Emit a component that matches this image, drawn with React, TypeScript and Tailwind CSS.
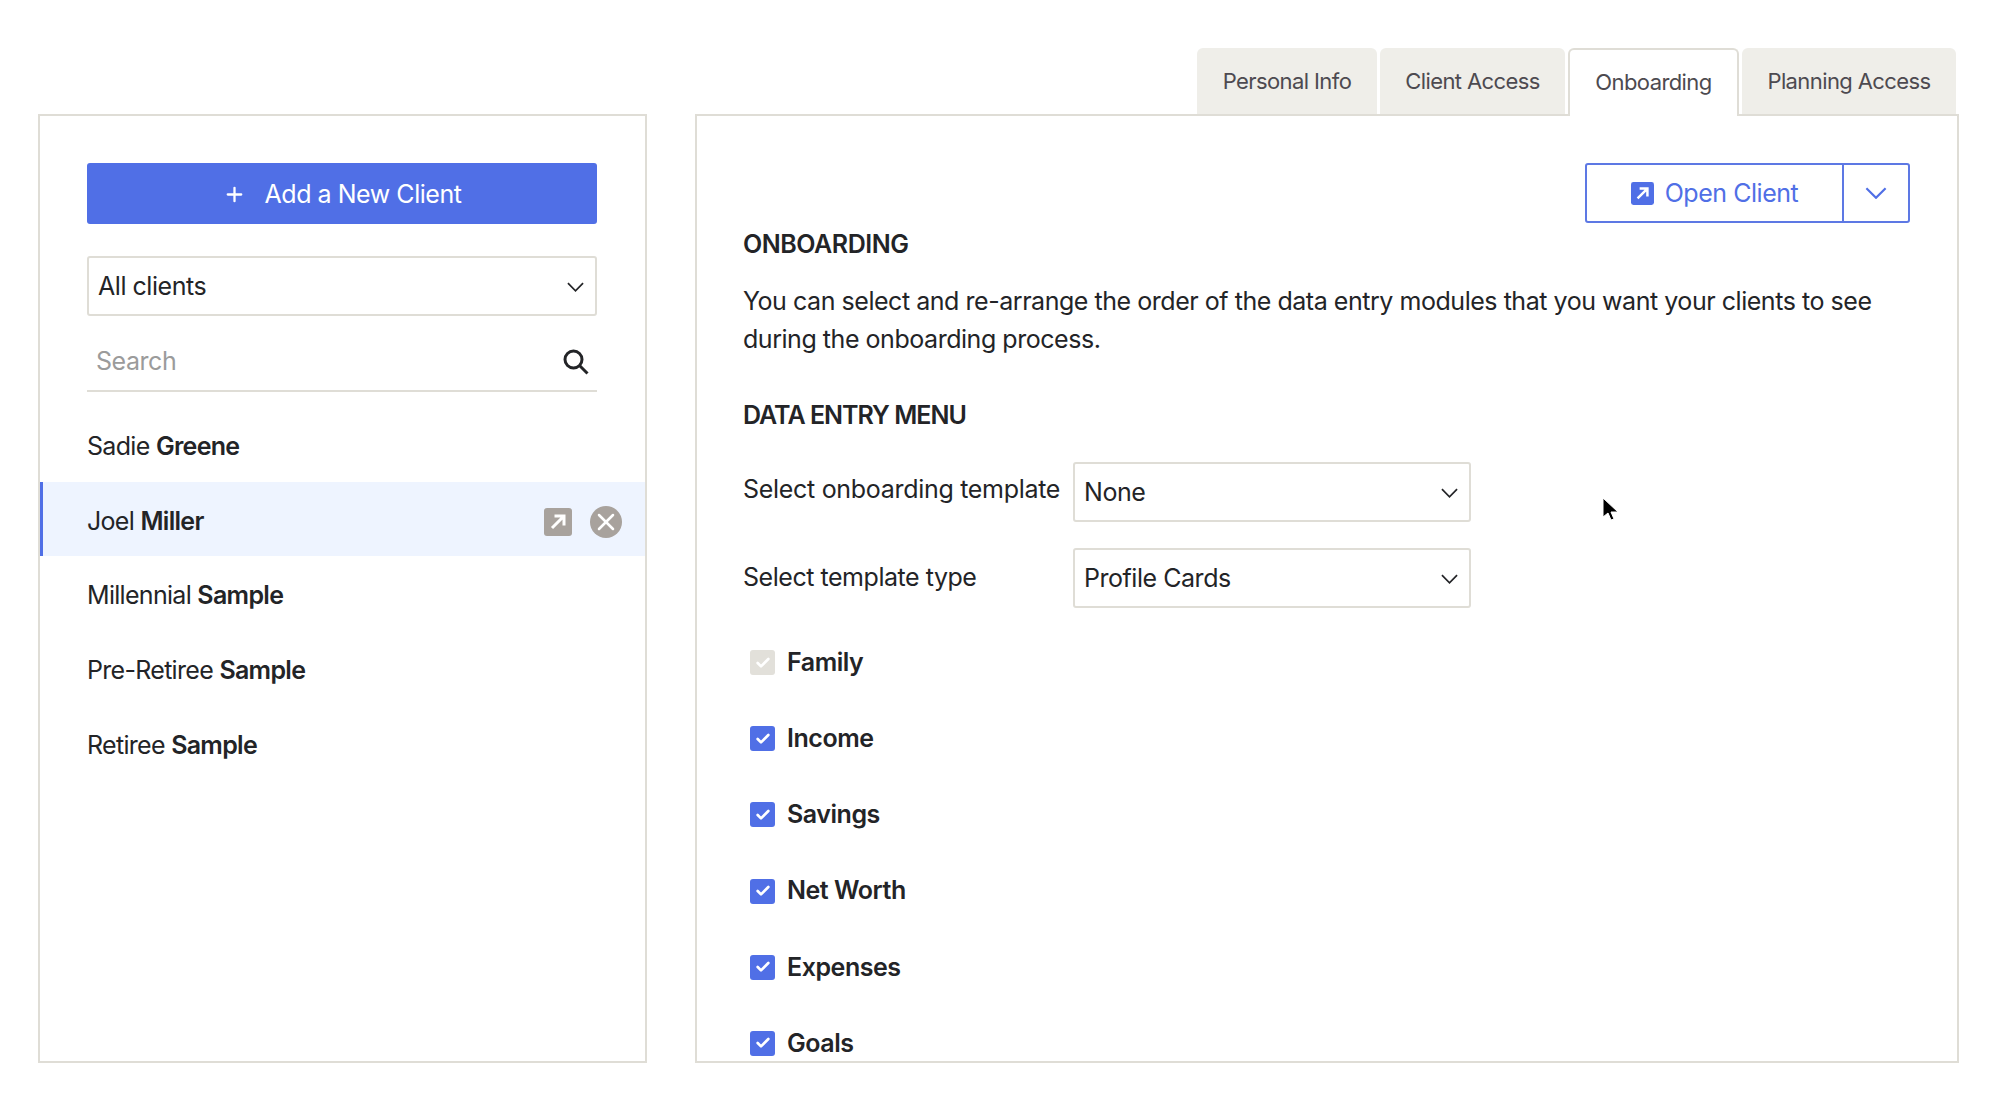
import { Check, Plus, X } from "lucide-react";

const tabs = [
  { label: "Personal Info", width: "w-[180px]" },
  { label: "Client Access", width: "w-[185px]" },
  { label: "Onboarding", width: "w-[171px]", active: true },
  { label: "Planning Access", width: "w-[214px]" },
];

const clients = [
  { first: "Sadie", last: "Greene" },
  { first: "Joel", last: "Miller", active: true },
  { first: "Millennial", last: "Sample" },
  { first: "Pre-Retiree", last: "Sample" },
  { first: "Retiree", last: "Sample" },
];

const modules = ["Family", "Income", "Savings", "Net Worth", "Expenses", "Goals"];

function Chevron({ className }: { className?: string }) {
  return (
    <svg viewBox="0 0 18 10" fill="none" stroke="currentColor" strokeWidth="1.8" className={className}>
      <path d="M1 1l8 8 8-8" />
    </svg>
  );
}

function ArrowBox({ className }: { className?: string }) {
  return (
    <svg viewBox="0 0 28 28" className={className}>
      <rect width="28" height="28" rx="3" fill="currentColor" />
      <path d="M8 20L20 8M10.5 8H20v9.5" fill="none" stroke="#fff" strokeWidth="3" />
    </svg>
  );
}

function SelectBox({ value, className }: { value: string; className: string }) {
  return (
    <div className={`flex items-center justify-between rounded-[3px] border-2 border-[#dfddd6] pl-[9px] pr-[11px] pt-[1px] text-[#232427] ${className}`}>
      <span>{value}</span>
      <Chevron className="h-[10px] w-[17px]" />
    </div>
  );
}

export default function App() {
  return (
    <div className="relative flex h-[1114px] w-[2000px] gap-[48px] overflow-hidden bg-white pl-[38px] pt-[48px] font-['Inter',sans-serif] text-[25px] tracking-[-0.46px] text-[#232427]">
      {/* client list */}
      <div className="mt-[66px] h-[949px] w-[609px] border-2 border-[#dfddd6]">
        <div className="pl-[47px] pr-[48px] pt-[47px]">
          <button className="flex h-[61px] w-full items-center justify-center gap-[19px] rounded-[3px] bg-[#506fe6] pt-[2px] text-white">
            <Plus size={23} strokeWidth={2.4} />
            Add a New Client
          </button>
          <SelectBox value="All clients" className="mt-[32px] h-[60px]" />
          <div className="mt-[16px] flex h-[60px] items-center justify-between border-b-2 border-[#dfddd6] pl-[9px] pr-[8px] pt-[1px] text-[#9b9b9b]">
            <span>Search</span>
            <svg viewBox="0 0 26 26" fill="none" stroke="#232427" strokeWidth="3" className="h-[26px] w-[26px]">
              <circle cx="10.5" cy="10.5" r="8.5" />
              <path d="M16.5 16.5L24.5 24.5" />
            </svg>
          </div>
        </div>
        <div className="mt-[15px]">
          {clients.map((c) => (
            <div
              key={c.first}
              className={`flex h-[74.7px] items-center justify-between pr-[23px] pt-[5px] tracking-[-0.7px] ${
                c.active ? "border-l-[3px] border-[#506fe6] bg-[#eef4ff] pl-[44px]" : "pl-[47px]"
              }`}
            >
              <span>
                {c.first} <b className="font-semibold">{c.last}</b>
              </span>
              {c.active && (
                <div className="flex items-center gap-[18px]">
                  <ArrowBox className="h-[28px] w-[28px] text-[#a8a29d]" />
                  <span className="flex h-[32px] w-[32px] items-center justify-center rounded-full bg-[#a8a29d] text-white">
                    <X size={28} strokeWidth={2.2} />
                  </span>
                </div>
              )}
            </div>
          ))}
        </div>
      </div>

      {/* details */}
      <div className="w-[1264px]">
        <div className="flex h-[66px] justify-end gap-[3px] pr-[3px]">
          {tabs.map((t) => (
            <div
              key={t.label}
              className={`relative z-10 flex items-center justify-center rounded-t-[6px] text-[22px] tracking-[-0.6px] text-[#4d4a50] ${t.width} ${
                t.active ? "h-[68px] border-2 border-b-0 border-[#dfddd6] bg-white pb-[1px]" : "h-[66px] bg-[#efeee9] pt-[1px]"
              }`}
            >
              {t.label}
            </div>
          ))}
        </div>
        <div className="h-[949px] overflow-hidden border-2 border-[#dfddd6] pl-[46px] pr-[47px] pt-[47px]">
          <div className="flex justify-end">
            <div className="flex h-[60px] w-[325px] rounded-[3px] border-2 border-[#5d78e4] text-[#506fe6]">
              <button className="flex flex-1 items-center justify-center gap-[11px] pt-[1px]">
                <ArrowBox className="h-[23px] w-[23px]" />
                Open Client
              </button>
              <button className="flex w-[66px] items-center justify-center border-l-2 border-[#5d78e4]">
                <Chevron className="h-[12px] w-[22px]" />
              </button>
            </div>
          </div>
          <h2 className="mt-[4px] font-semibold leading-[34px]">ONBOARDING</h2>
          <p className="mt-[21px] w-[1160px] leading-[38px]">
            You can select and re-arrange the order of the data entry modules that you want your clients to see during the onboarding process.
          </p>
          <h2 className="mt-[40px] font-semibold leading-[34px] tracking-[-1px]">DATA ENTRY MENU</h2>

          <div className="mt-[30px] flex items-center tracking-[-0.3px]">
            <span className="mb-[4px] w-[330px]">Select onboarding template</span>
            <SelectBox value="None" className="h-[60px] w-[398px] tracking-[-0.46px]" />
          </div>
          <div className="mt-[26px] flex items-center tracking-[-0.46px]">
            <span className="w-[330px]">Select template type</span>
            <SelectBox value="Profile Cards" className="h-[60px] w-[398px]" />
          </div>

          <div className="mt-[42px] flex flex-col gap-[51.2px] pl-[7px]">
            {modules.map((m, i) => (
              <div key={m} className="flex h-[25px] items-center gap-[12px] font-semibold">
                <span
                  className={`flex h-[25px] w-[25px] items-center justify-center rounded-[3px] text-white ${
                    i === 0 ? "bg-[#e2e0da]" : "bg-[#506fe6]"
                  }`}
                >
                  <Check size={16} strokeWidth={4} />
                </span>
                {m}
              </div>
            ))}
          </div>
        </div>
      </div>

      {/* mouse pointer */}
      <svg viewBox="0 0 20 26" className="absolute left-[1600px] top-[497px] h-[26px] w-[20px]">
        <path d="M3 1v19l5-4 3 7 3-1-3-7h7z" fill="#000" stroke="#fff" strokeWidth="1" />
      </svg>
    </div>
  );
}
